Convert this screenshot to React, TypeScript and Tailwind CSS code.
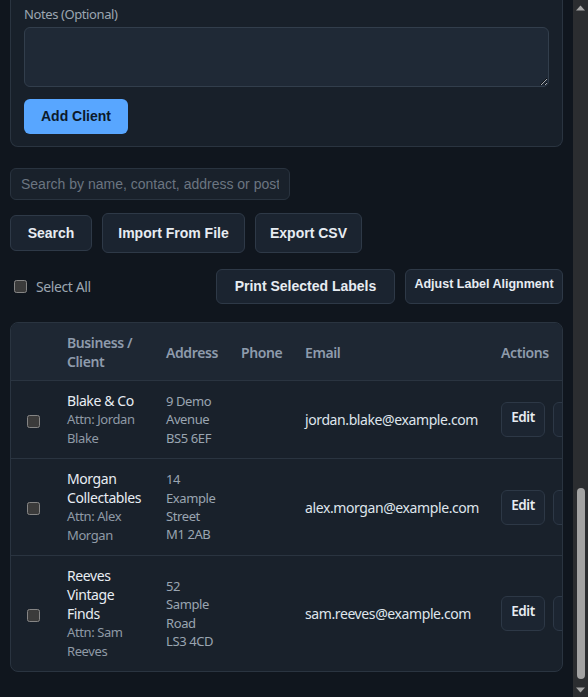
import React from 'react';

type Client = {
  id: number;
  business: string;
  contact: string;
  address: string;
  phone: string;
  email: string;
};

const clients: Client[] = [
  { id: 1, business: 'Blake & Co', contact: 'Attn: Jordan Blake', address: '9 Demo Avenue BS5 6EF', phone: '', email: 'jordan.blake@example.com' },
  { id: 2, business: 'Morgan Collectables', contact: 'Attn: Alex Morgan', address: '14 Example Street M1 2AB', phone: '', email: 'alex.morgan@example.com' },
  { id: 3, business: 'Reeves Vintage Finds', contact: 'Attn: Sam Reeves', address: '52 Sample Road LS3 4CD', phone: '', email: 'sam.reeves@example.com' },
];

const btn =
  "rounded-md border border-[#2e3947] bg-[#1b2430] text-[#e7ecf2] font-bold tracking-normal font-['Liberation_Sans',Arial,sans-serif]";

function Scrollbar() {
  return (
    <div className="flex w-[15px] shrink-0 flex-col bg-[#2b2d30]">
      <div className="flex h-[15px] items-center justify-center">
        <svg width="9" height="6" viewBox="0 0 9 6">
          <path d="M0 5.5 L4.5 0.5 L9 5.5 Z" fill="#a6a6a6" />
        </svg>
      </div>
      <div className="flex flex-1 flex-col items-center justify-end pb-[3px]">
        <div className="h-[191px] w-[8px] rounded-full bg-[#a3a3a3]" />
      </div>
      <div className="flex h-[15px] items-center justify-center">
        <svg width="9" height="6" viewBox="0 0 9 6">
          <path d="M0 0.5 L4.5 5.5 L9 0.5 Z" fill="#a6a6a6" />
        </svg>
      </div>
    </div>
  );
}

export default function App() {
  return (
    <div className="scheme-dark flex h-[697px] overflow-hidden bg-[#10161e] font-['Noto_Sans',sans-serif] tracking-[-0.4px]">
      <main className="min-w-0 flex-1 px-[10px]">
        {/* add client form (scrolled, top cut off) */}
        <div className="rounded-b-lg border-x border-b border-[#2a3440] bg-[#18202a] px-[13px] pb-[12px] pt-[4px]">
          <label className="block text-[13px] leading-5 text-[#9ca6b1]">Notes (Optional)</label>
          <textarea className="mt-[3px] block h-[60px] w-full rounded-md border border-[#323e4c] bg-[#1f2936] px-2 py-1 text-[14px] text-[#e7ecf2]" />
          <button className="mt-[12px] h-[35px] w-[104px] rounded-md bg-[#58a6ff] text-[14px] font-bold tracking-normal text-[#0c1a2b] font-['Liberation_Sans',Arial,sans-serif]">
            Add Client
          </button>
        </div>

        <input
          type="text"
          placeholder="Search by name, contact, address or postcode"
          className="mt-[21px] block h-[32px] w-[280px] rounded-md border border-[#29333f] bg-[#19212b] px-[10px] text-[14px] tracking-normal text-[#e7ecf2] outline-none placeholder:text-[#6b7581] font-['Liberation_Sans',Arial,sans-serif]"
        />

        <div className="mt-[13px] flex items-center gap-[10px]">
          <button className={`${btn} h-[36px] w-[82px] text-[14px]`}>Search</button>
          <button className={`${btn} h-[40px] w-[143px] text-[14px]`}>Import From File</button>
          <button className={`${btn} h-[40px] w-[107px] text-[14px]`}>Export CSV</button>
        </div>

        <div className="mt-[16px] flex items-center justify-between">
          <label className="flex items-center gap-[9px] pl-[4px] text-[14px] text-[#9ca6b1]">
            <input type="checkbox" className="m-0 h-[13px] w-[13px]" />
            Select All
          </label>
          <div className="flex gap-[10px]">
            <button className={`${btn} h-[35px] w-[179px] text-[14px]`}>Print Selected Labels</button>
            <button className={`${btn} h-[35px] w-[158px] pb-[5px] text-[12.5px]`}>Adjust Label Alignment</button>
          </div>
        </div>

        {/* client table */}
        <div className="mt-[18px] overflow-hidden rounded-lg border border-[#2a3440] bg-[#19212b]">
          <table className="w-[618px] table-fixed border-collapse text-left">
            <colgroup>
              <col className="w-[44px]" />
              <col className="w-[99px]" />
              <col className="w-[75px]" />
              <col className="w-[64px]" />
              <col className="w-[196px]" />
              <col className="w-[140px]" />
            </colgroup>
            <thead className="bg-[#1e2733]">
              <tr className="text-[14px] font-semibold leading-[19px] text-[#8e9bac]">
                <th className="px-3 pb-[9px] pt-[10px]" />
                <th className="px-3 pb-[9px] pt-[10px] font-semibold">Business / Client</th>
                <th className="px-3 pb-[9px] pt-[10px] font-semibold">Address</th>
                <th className="px-3 pb-[9px] pt-[10px] font-semibold">Phone</th>
                <th className="px-3 pb-[9px] pt-[10px] font-semibold">Email</th>
                <th className="px-3 pb-[9px] pt-[10px] font-semibold">Actions</th>
              </tr>
            </thead>
            <tbody>
              {clients.map((c) => (
                <tr key={c.id} className="border-t border-[#2a3440] align-middle">
                  <td className="py-[10px] text-center">
                    <input type="checkbox" className="m-0 h-[13px] w-[13px] align-middle" />
                  </td>
                  <td className="px-3 py-[10px]">
                    <div className="text-[14px] leading-[19px] text-[#e8edf3]">{c.business}</div>
                    <div className="text-[13px] leading-[19px] text-[#8f9aa6]">{c.contact}</div>
                  </td>
                  <td className="px-3 py-[10px] text-[13px] leading-[18.3px] text-[#9aa5b1]">{c.address}</td>
                  <td className="px-3 py-[10px] text-[13px] text-[#9aa5b1]">{c.phone}</td>
                  <td className="px-3 py-[10px] text-[14px] text-[#dfe5ec]">{c.email}</td>
                  <td className="px-3 py-[10px]">
                    <div className="flex gap-[8px]">
                      <button className="h-[35px] w-[44px] rounded-md border border-[#2d3846] bg-[#1c2531] pb-[4px] text-[13.5px] font-semibold text-[#e7ecf2]">
                        Edit
                      </button>
                      <button className="h-[35px] w-[60px] rounded-md border border-[#2d3846] bg-[#1c2531] pb-[4px] text-[13.5px] font-semibold text-[#e7ecf2]">
                        Delete
                      </button>
                    </div>
                  </td>
                </tr>
              ))}
            </tbody>
          </table>
        </div>
      </main>
      <Scrollbar />
    </div>
  );
}
